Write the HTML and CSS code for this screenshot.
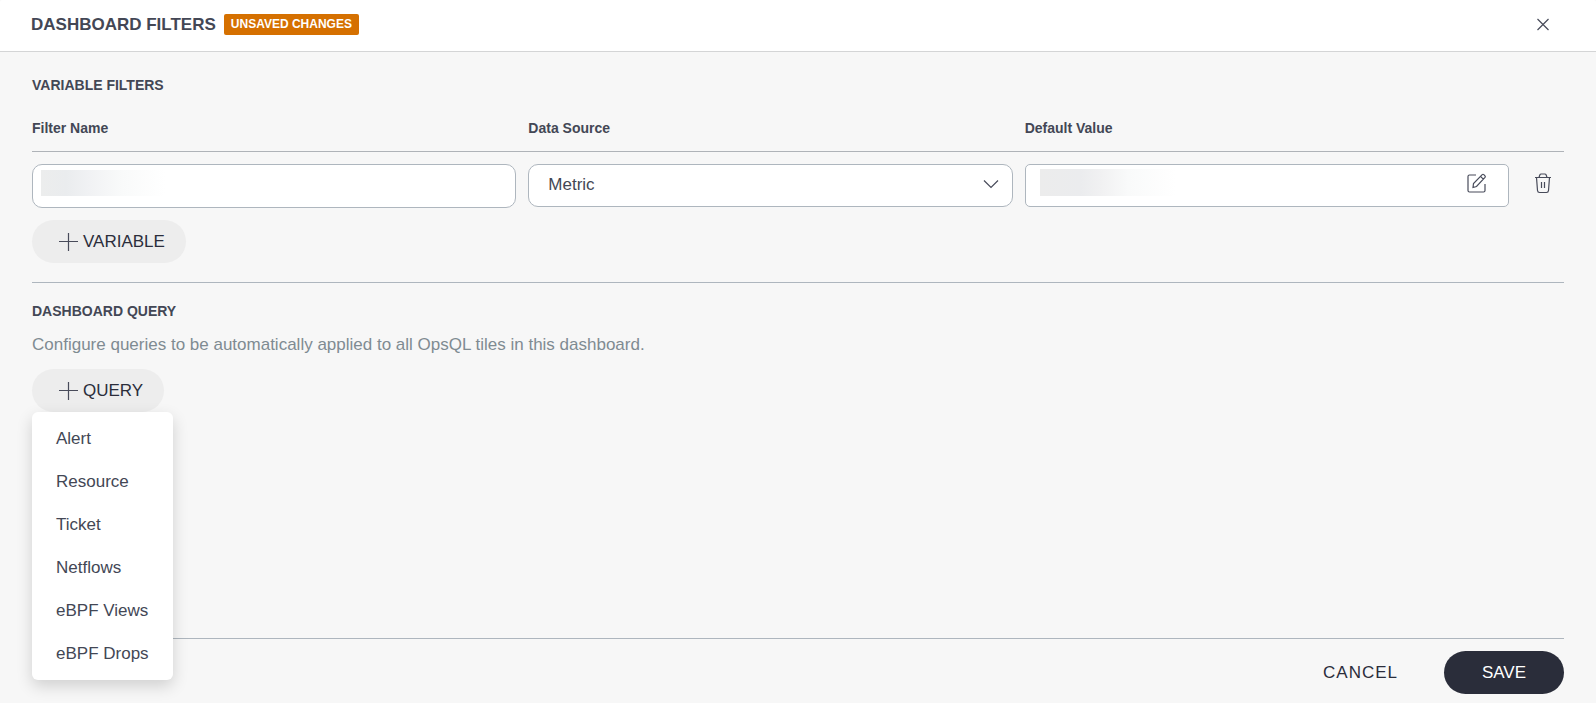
FILE: index.html
```html
<!DOCTYPE html>
<html lang="en">
<head>
<meta charset="utf-8">
<title>Dashboard Filters</title>
<link rel="stylesheet" href="styles.css">
</head>
<body>
<form class="dialog">
  <header class="dialog-header">
    <h1 class="dialog-title">DASHBOARD FILTERS</h1>
    <span class="badge">UNSAVED CHANGES</span>
    <button type="button" class="icon-button close-button" aria-label="Close">
      <svg width="14" height="14" viewBox="0 0 14 14"><path d="M1.500 1l11 11M12.500 1l-11 11"/></svg>
    </button>
  </header>

  <main class="dialog-body">
    <section class="section">
      <h2 class="section-title">VARIABLE FILTERS</h2>
      <table class="filters">
        <colgroup><col><col><col><col class="col-action"></colgroup>
        <thead>
          <tr><th scope="col">Filter Name</th><th scope="col">Data Source</th><th scope="col">Default Value</th><td></td></tr>
        </thead>
        <tbody>
          <tr>
            <td><input class="field field-name" type="text" aria-label="Filter Name"></td>
            <td>
              <div class="field-wrap">
                <select class="field field-select" aria-label="Data Source"><option>Metric</option></select>
                <svg class="chevron" width="16" height="10" viewBox="0 0 16 10"><path d="M1 1.500l7 7 7-7"/></svg>
              </div>
            </td>
            <td>
              <div class="field-wrap">
                <input class="field field-value" type="text" aria-label="Default Value">
                <button type="button" class="icon-button edit-button" aria-label="Edit default value">
                  <svg width="20" height="20" viewBox="0 0 20 20"><path d="M9 2H2.500Q1 2 1 3.500v14Q1 19 2.500 19h14q1.500 0 1.500-1.500V11M6 14.500l.500-4L15.200 1.600q.800-.700 1.600 0l1.200 1.200q.700.800 0 1.600L9.500 13.500 6 14.500zM13.500 3.400l2.800 2.800"/></svg>
                </button>
              </div>
            </td>
            <td class="cell-action">
              <button type="button" class="icon-button" aria-label="Delete filter">
                <svg width="20" height="22" viewBox="0 0 20 22"><path d="M2 5.500h16M3.500 5.500l1 13q.200 2 2 2h7q1.800 0 2-2l1-13M6 5.500l.800-2.500q.400-1 1.400-1h3.600q1 0 1.400 1l.800 2.500M8.500 10v6M11.500 10v6"/></svg>
              </button>
            </td>
          </tr>
        </tbody>
      </table>
      <button type="button" class="button button-add">
        <svg width="20" height="20" viewBox="0 0 20 20"><path d="M10.500 1v18M1 9.500h19"/></svg>VARIABLE
      </button>
    </section>

    <section class="section section-query">
      <h2 class="section-title">DASHBOARD QUERY</h2>
      <p class="hint">Configure queries to be automatically applied to all OpsQL tiles in this dashboard.</p>
      <div class="dropdown">
        <button type="button" class="button button-add" aria-haspopup="menu" aria-expanded="true">
          <svg width="20" height="20" viewBox="0 0 20 20"><path d="M10.500 1v18M1 9.500h19"/></svg>QUERY
        </button>
        <div class="menu" role="menu">
          <button type="button" class="menu-item" role="menuitem">Alert</button>
          <button type="button" class="menu-item" role="menuitem">Resource</button>
          <button type="button" class="menu-item" role="menuitem">Ticket</button>
          <button type="button" class="menu-item" role="menuitem">Netflows</button>
          <button type="button" class="menu-item" role="menuitem">eBPF Views</button>
          <button type="button" class="menu-item" role="menuitem">eBPF Drops</button>
        </div>
      </div>
    </section>
  </main>

  <footer class="dialog-footer">
    <button type="button" class="button button-text">CANCEL</button>
    <button type="submit" class="button button-primary">SAVE</button>
  </footer>
</form>
</body>
</html>
```
FILE: styles.css
```css
* {
  box-sizing: border-box;
}

body {
  margin: 0;
  background: #f7f7f7;
  color: #434755;
  font-family: "Liberation Sans", Arial, sans-serif;
  font-size: 17px;
}

button,
input,
select {
  margin: 0;
  color: inherit;
  font: inherit;
}

svg {
  display: block;
  flex: none;
  fill: none;
  stroke: #484b5a;
  stroke-width: 1.2;
}

.dialog {
  display: flex;
  flex-direction: column;
  min-height: 100vh;
}

.dialog-header {
  display: flex;
  align-items: center;
  gap: 8px;
  height: 52px;
  padding: 0 42px 2px 31px;
  border-bottom: 1px solid #d4d5d6;
  border-radius: 2px 2px 0 0;
  background: #fff;
}

.dialog-title {
  margin: 0;
  font-size: 17px;
  line-height: 20px;
}

.badge {
  padding: 0 7px;
  border-radius: 2px;
  background: #d57000;
  color: #fff;
  font-size: 12px;
  font-weight: bold;
  line-height: 21px;
}

.icon-button {
  display: inline-flex;
  padding: 4px;
  border: 0;
  background: none;
}

.close-button {
  margin-left: auto;
}

.dialog-body {
  flex: 1;
  padding: 24px 32px 0;
}

.section-title {
  margin: 0;
  font-size: 14px;
  line-height: 18px;
}

.filters {
  width: 100%;
  margin-top: 12px;
  border-spacing: 0;
  table-layout: fixed;
}

.col-action {
  width: 43px;
}

.filters th,
.filters thead td {
  padding: 12px 0 13px;
  border-bottom: 1px solid #afb3b8;
  font-size: 14px;
  line-height: 20px;
  text-align: left;
}

.filters tbody td {
  padding: 12px 12px 12px 0;
  vertical-align: top;
}

.filters tbody .cell-action {
  padding: 16px 0 0;
  text-align: center;
}

.field-wrap {
  position: relative;
}

.field {
  display: block;
  width: 100%;
  height: 43px;
  padding: 0 19px;
  border: 1px solid #aeb6be;
  border-radius: 10px;
  background-color: #fff;
  appearance: none;
}

.field-select {
  padding-bottom: 2px;
}

.field-name {
  height: 44px;
  background: linear-gradient(90deg, #eceded, #eaecee 20%, #f1f2f4 40%, #f9fafa 65%, #fff) 8px 5px / 124px 26px no-repeat #fff;
}

.field-value {
  border-radius: 5px;
  background: linear-gradient(90deg, #ececec, #ebecee 30%, #f1f1f2 45%, #f9fafa 65%, #fff) 14px 4px / 136px 27px no-repeat #fff;
}

.chevron {
  position: absolute;
  top: 15px;
  right: 14px;
  pointer-events: none;
}

.edit-button {
  position: absolute;
  top: 5px;
  right: 18px;
}

.button {
  display: inline-flex;
  align-items: center;
  justify-content: center;
  height: 43px;
  padding: 0 22px;
  border: 0;
  border-radius: 22px;
  background: none;
  color: #2b2d3b;
}

.button-add {
  gap: 5px;
  padding: 0 21px 0 26px;
  background: #ededed;
}

.section-query {
  margin-top: 19px;
  padding-top: 19px;
  border-top: 1px solid #aeb6be;
}

.hint {
  margin: 14px 0 13px;
  color: #7f8b92;
  line-height: 22px;
}

.dropdown {
  position: relative;
  width: max-content;
}

.menu {
  position: absolute;
  z-index: 1;
  top: 100%;
  left: 0;
  padding: 5px 0;
  border-radius: 6px;
  background: #fff;
  box-shadow: 0 6px 16px rgba(0, 0, 0, 0.16);
}

.menu-item {
  display: block;
  width: 100%;
  height: 43px;
  padding: 0 24px;
  border: 0;
  background: none;
  text-align: left;
  white-space: nowrap;
}

.dialog-footer {
  display: flex;
  justify-content: flex-end;
  gap: 24px;
  margin: 0 32px;
  padding: 12px 0 9px;
  border-top: 1px solid #aeb6be;
}

.button-text {
  letter-spacing: 1px;
}

.button-primary {
  min-width: 120px;
  background: #2a2d3a;
  color: #fff;
}
```
